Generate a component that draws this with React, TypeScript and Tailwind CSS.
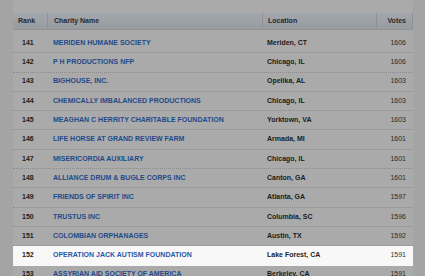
import React from 'react';

const ROWS = [
  { rank: 141, name: 'MERIDEN HUMANE SOCIETY', location: 'Meriden, CT', votes: 1606 },
  { rank: 142, name: 'P H PRODUCTIONS NFP', location: 'Chicago, IL', votes: 1606 },
  { rank: 143, name: 'BIGHOUSE, INC.', location: 'Opelika, AL', votes: 1603 },
  { rank: 144, name: 'CHEMICALLY IMBALANCED PRODUCTIONS', location: 'Chicago, IL', votes: 1603 },
  { rank: 145, name: 'MEAGHAN C HERRITY CHARITABLE FOUNDATION', location: 'Yorktown, VA', votes: 1603 },
  { rank: 146, name: 'LIFE HORSE AT GRAND REVIEW FARM', location: 'Armada, MI', votes: 1601 },
  { rank: 147, name: 'MISERICORDIA AUXILIARY', location: 'Chicago, IL', votes: 1601 },
  { rank: 148, name: 'ALLIANCE DRUM & BUGLE CORPS INC', location: 'Canton, GA', votes: 1601 },
  { rank: 149, name: 'FRIENDS OF SPIRIT INC', location: 'Atlanta, GA', votes: 1597 },
  { rank: 150, name: 'TRUSTUS INC', location: 'Columbia, SC', votes: 1596 },
  { rank: 151, name: 'COLOMBIAN ORPHANAGES', location: 'Austin, TX', votes: 1592 },
  { rank: 152, name: 'OPERATION JACK AUTISM FOUNDATION', location: 'Lake Forest, CA', votes: 1591 },
  { rank: 153, name: 'ASSYRIAN AID SOCIETY OF AMERICA', location: 'Berkeley, CA', votes: 1591 },
];

const HIGHLIGHT = 152;

export default function App() {
  return (
    <div className="w-[425px] h-[276px] overflow-hidden bg-[#a4a4a4] font-['Liberation_Sans',Arial,sans-serif] text-[7px]">
      <div className="ml-[13px] w-[400px] h-full bg-[#aaaaaa] pt-[13px]">
        {/* header */}
        <div className="flex h-[17px] items-center bg-gradient-to-b from-[#a3a7ab] to-[#979ca1] border-b border-[#8f9397] font-bold text-[#2a2a2a]">
          <div className="w-[34px] pl-[5px]">Rank</div>
          <div className="w-[215px] h-full flex items-center pl-[6px] border-l border-[#8e9297]">Charity Name</div>
          <div className="w-[114px] h-full flex items-center pl-[5px] border-l border-[#8e9297]">Location</div>
          <div className="w-[37px] h-full flex items-center justify-end pr-[6px] border-l border-r border-[#8e9297]">Votes</div>
        </div>

        {/* rows */}
        <div className="pt-[4px]">
          {ROWS.map((r) => {
            const hi = r.rank === HIGHLIGHT;
            return (
              <div
                key={r.rank}
                className={`flex h-[19.3px] items-center border-b border-dotted ${
                  hi ? 'bg-[#f8f8f8] border-[#f8f8f8]' : 'border-[#8c8c8c]'
                }`}
              >
                <div className={`w-[34px] pl-[9px] font-bold ${hi ? 'text-[#222]' : 'text-[#1c1c1c]'}`}>{r.rank}</div>
                <div className={`w-[215px] pl-[6px] font-bold whitespace-nowrap overflow-hidden ${hi ? 'text-[#2857a8]' : 'text-[#1f4a8a]'}`}>
                  {r.name}
                </div>
                <div className={`w-[114px] pl-[5px] font-bold ${hi ? 'text-[#222]' : 'text-[#1c1c1c]'}`}>{r.location}</div>
                <div className={`w-[37px] pr-[7px] text-right ${hi ? 'text-[#333]' : 'text-[#2a2a2a]'}`}>{r.votes}</div>
              </div>
            );
          })}
        </div>
      </div>
    </div>
  );
}
